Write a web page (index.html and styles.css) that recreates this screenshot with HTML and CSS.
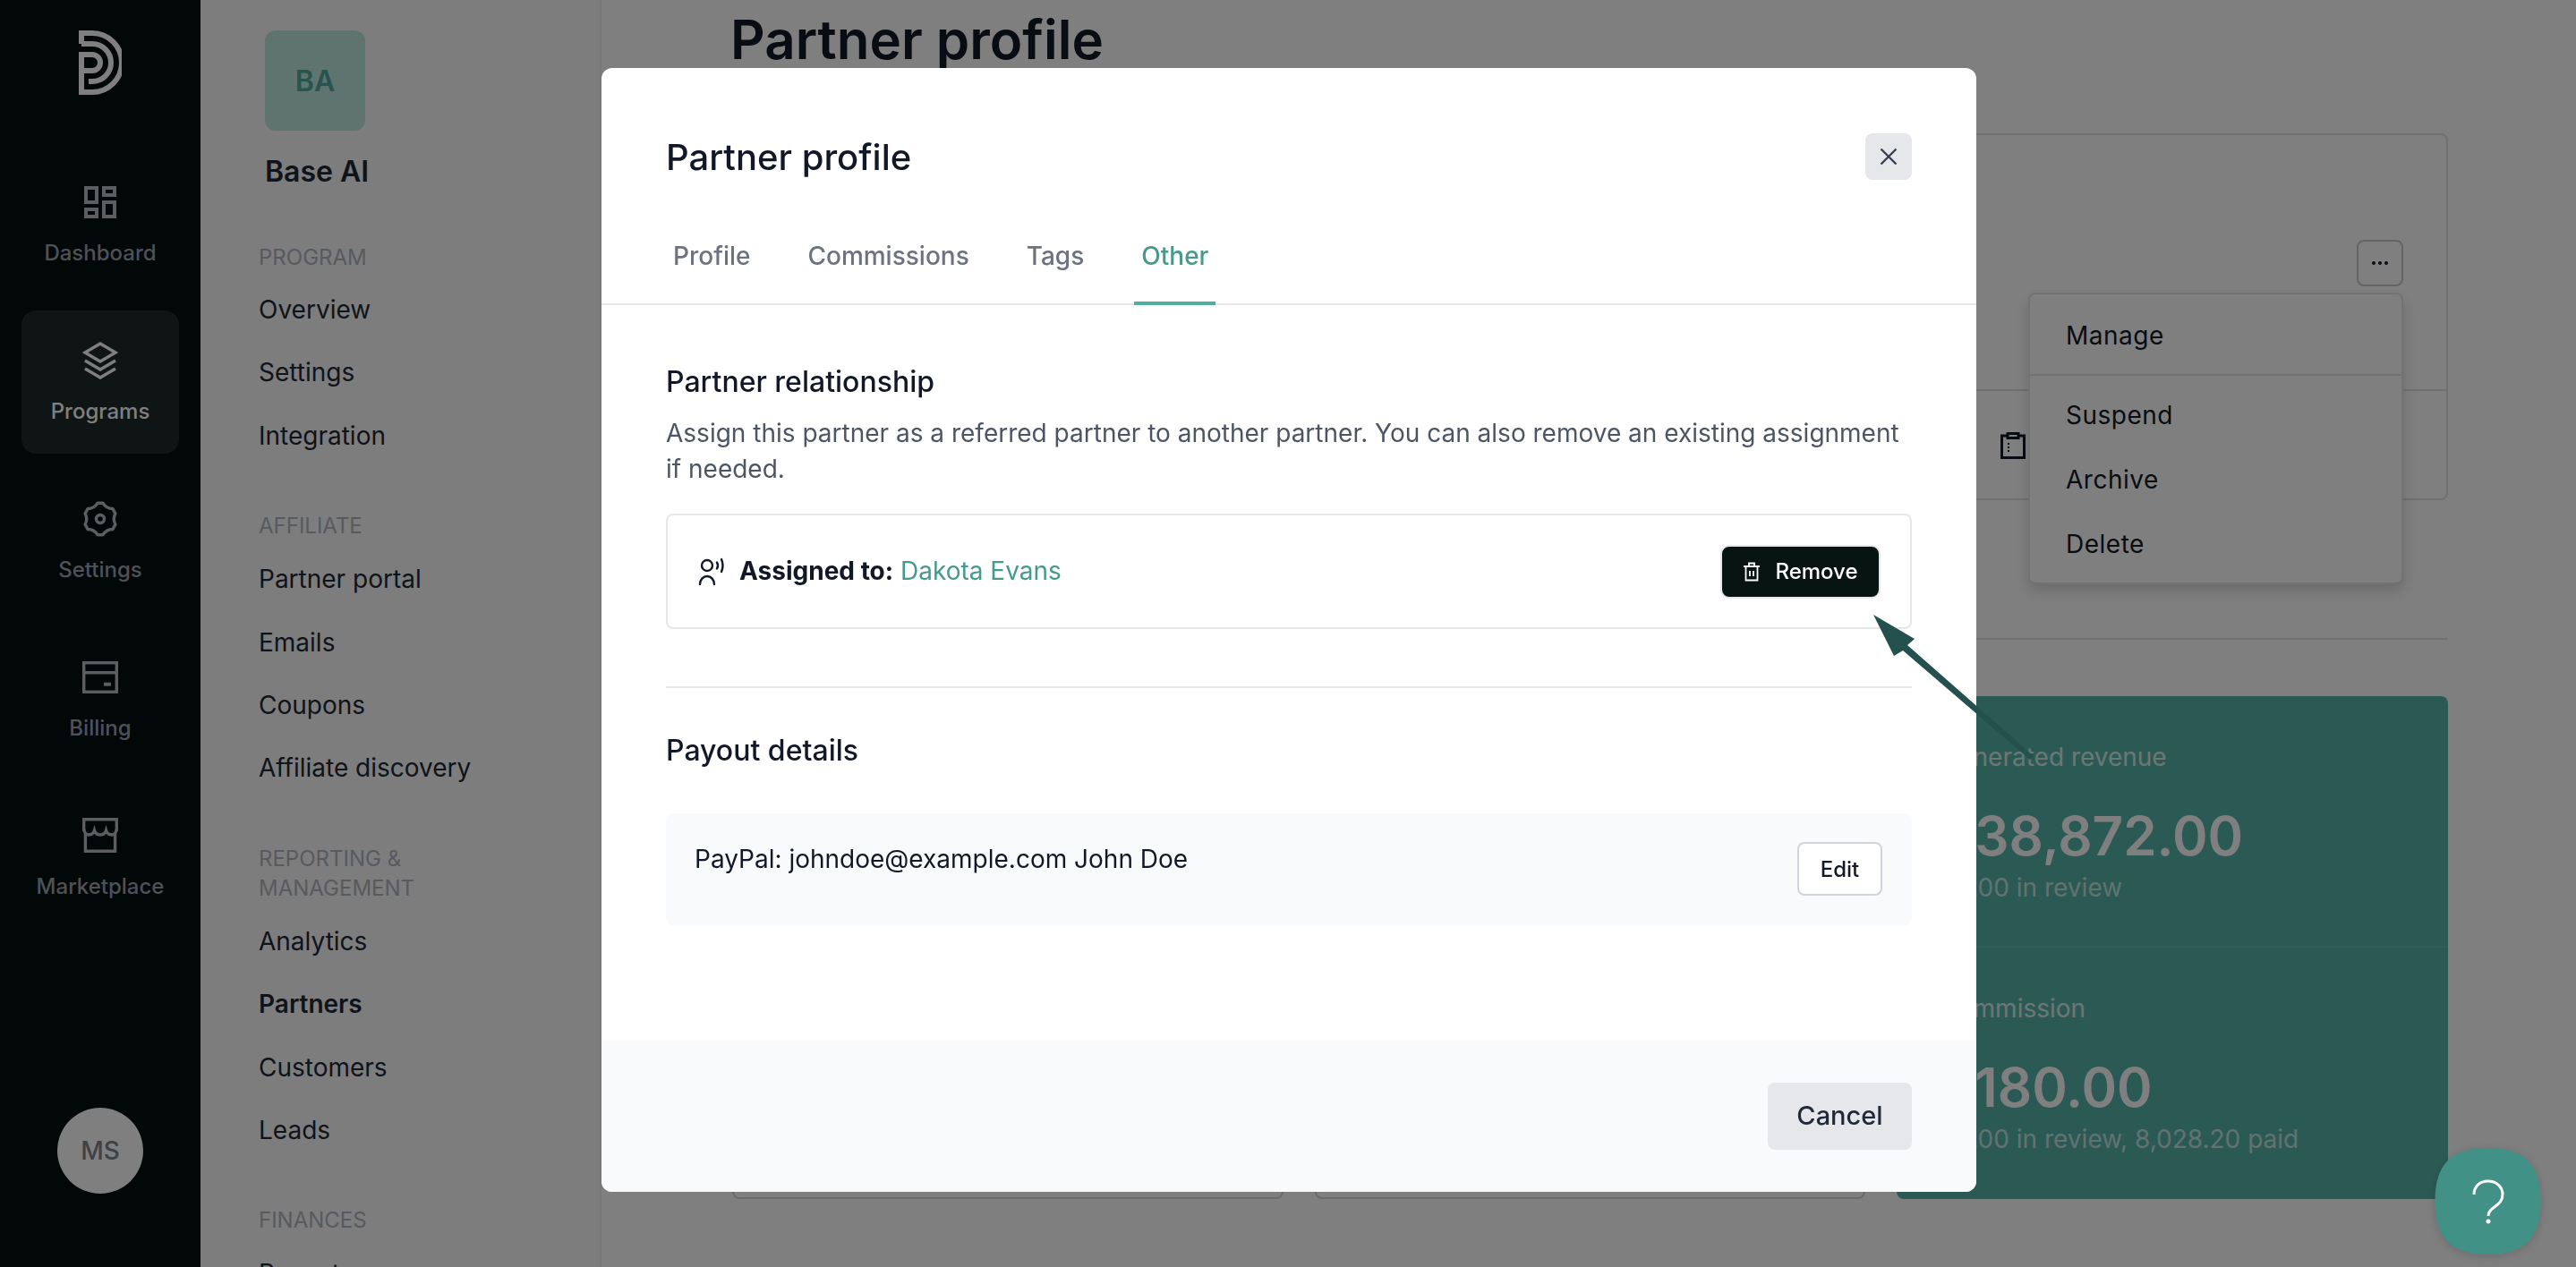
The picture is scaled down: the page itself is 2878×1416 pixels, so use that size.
FILE: index.html
```html
<!DOCTYPE html>
<html lang="en">
<head>
<meta charset="UTF-8">
<meta name="viewport" content="width=device-width, initial-scale=1.0">
<title>Partner profile</title>
<link rel="stylesheet" href="styles.css">
</head>
<body>

<div class="app">
  <aside class="rail">
    <svg class="logo" viewBox="0 0 48 72" fill="none" stroke="currentColor" stroke-width="6">
      <path d="M3 15V3H15A33 33 0 0 1 15 69H3V27H15A9 9 0 0 1 15 45H3"/>
      <path d="M3 15H15A21 21 0 0 1 15 57H11"/>
    </svg>
    <nav class="rail-nav">
      <a class="rail-item">
        <svg class="rail-icon" viewBox="0 0 24 24" fill="currentColor"><path d="M19 5v2h-4V5h4M9 5v6H5V5h4m10 8v6h-4v-6h4M9 17v2H5v-2h4M21 3h-8v6h8V3zM11 3H3v10h8V3zm10 8h-8v10h8V11zm-10 4H3v6h8v-6z"/></svg>
        <span>Dashboard</span>
      </a>
      <a class="rail-item active">
        <svg class="rail-icon" viewBox="0 0 48 48" fill="none" stroke="currentColor" stroke-width="3.4">
          <path d="M24 5L41 15L24 25L7 15Z"/>
          <path d="M7 24L24 34L41 24"/>
          <path d="M7 33L24 43L41 33"/>
        </svg>
        <span>Programs</span>
      </a>
      <a class="rail-item">
        <svg class="rail-icon" viewBox="0 0 48 48" fill="none" stroke="currentColor" stroke-width="3.4" stroke-linejoin="round">
          <path d="M20.87 6.27L27.13 6.27Q30.75 12.31 37.79 12.43L40.91 17.84Q37.5 24 40.91 30.16L37.79 35.57Q30.75 35.69 27.13 41.73L20.87 41.73Q17.25 35.69 10.21 35.57L7.09 30.16Q10.5 24 7.09 17.84L10.21 12.43Q17.25 12.31 20.87 6.27Z"/>
          <circle cx="24" cy="24" r="4.5"/>
        </svg>
        <span>Settings</span>
      </a>
      <a class="rail-item">
        <svg class="rail-icon" viewBox="0 0 48 48" fill="none" stroke="currentColor" stroke-width="3.4">
          <rect x="5.7" y="7.7" width="36.6" height="32.6"/>
          <path d="M5.7 18.7H42.3"/>
          <path d="M28 31.7H36" stroke-width="4"/>
        </svg>
        <span>Billing</span>
      </a>
      <a class="rail-item">
        <svg class="rail-icon" viewBox="0 0 48 48" fill="none" stroke="currentColor" stroke-width="3.4">
          <path d="M5.7 19V5.700H42.3V19"/>
          <path d="M5.7 17Q7 23 11 23Q16 23 17.5 18Q19 23 24 23Q29 23 30.5 18Q32 23 37 23Q41 23 42.3 17"/>
          <path d="M7.4 21V41.3H40.6V21"/>
        </svg>
        <span>Marketplace</span>
      </a>
    </nav>
    <div class="avatar">MS</div>
  </aside>

  <aside class="sidebar">
    <div class="brand-tile">BA</div>
    <div class="brand-name">Base AI</div>

    <div class="side-heading first">Program</div>
    <a class="side-link">Overview</a>
    <a class="side-link">Settings</a>
    <a class="side-link">Integration</a>

    <div class="side-heading">Affiliate</div>
    <a class="side-link">Partner portal</a>
    <a class="side-link">Emails</a>
    <a class="side-link">Coupons</a>
    <a class="side-link">Affiliate discovery</a>

    <div class="side-heading">Reporting &amp;<br>Management</div>
    <a class="side-link">Analytics</a>
    <a class="side-link current">Partners</a>
    <a class="side-link">Customers</a>
    <a class="side-link">Leads</a>

    <div class="side-heading">Finances</div>
    <a class="side-link">Payouts</a>
  </aside>

  <main class="main">
    <h1 class="page-title">Partner profile</h1>

    <section class="profile-card">
      <div class="profile-top">
        <button class="more-btn" type="button">
          <svg width="18" height="4" viewBox="0 0 18 4" fill="currentColor"><circle cx="2" cy="2" r="2"/><circle cx="9" cy="2" r="2"/><circle cx="16" cy="2" r="2"/></svg>
        </button>
      </div>
      <div class="profile-bottom">
        <svg width="28" height="30" viewBox="0 0 28 30" fill="none" stroke="currentColor" stroke-width="3">
          <path d="M8 4H1.5V28.5H26.5V4H20"/>
          <rect x="8" y="1.5" width="12" height="5"/>
          <path d="M9 12V23" stroke-width="2" stroke-dasharray="2 2"/>
        </svg>
      </div>
      <div class="dropdown">
        <a class="dropdown-item">Manage</a>
        <div class="dropdown-line"></div>
        <a class="dropdown-item">Suspend</a>
        <a class="dropdown-item">Archive</a>
        <a class="dropdown-item">Delete</a>
      </div>
    </section>

    <hr class="main-line">

    <section class="stats">
      <div class="stat-card"></div>
      <div class="stat-card"></div>
      <div class="stat-card teal">
        <div class="stat-block">
          <div class="stat-label">Generated revenue</div>
          <div class="stat-value">$38,872.00</div>
          <div class="stat-note">$0.00 in review</div>
        </div>
        <div class="stat-block">
          <div class="stat-label">Commission</div>
          <div class="stat-value">$180.00</div>
          <div class="stat-note">$0.00 in review, 8,028.20 paid</div>
        </div>
      </div>
    </section>
  </main>
</div>

<div class="overlay"></div>

<div class="modal">
  <header class="modal-head">
    <h2 class="modal-title">Partner profile</h2>
    <button class="close-btn" type="button">
      <svg width="20" height="20" viewBox="0 0 20 20" fill="none" stroke="currentColor" stroke-width="2.4"><path d="M1.5 1.5L18.5 18.5M18.5 1.5L1.5 18.5"/></svg>
    </button>
  </header>

  <div class="tabs">
    <a class="tab">Profile</a>
    <a class="tab">Commissions</a>
    <a class="tab">Tags</a>
    <a class="tab active">Other</a>
  </div>

  <div class="modal-body">
    <h3 class="section-title">Partner relationship</h3>
    <p class="section-text">Assign this partner as a referred partner to another partner. You can also remove an existing assignment if needed.</p>

    <div class="assign-box">
      <svg class="assign-icon" width="32" height="32" viewBox="0 0 32 32" fill="none" stroke="currentColor" stroke-width="2.4" stroke-linecap="round">
        <circle cx="11" cy="9" r="6"/>
        <path d="M3 30A8 9 0 0 1 19 30"/>
        <path d="M22 5.5Q24 9 22 12.5"/>
        <path d="M27 2Q30 9 27 16"/>
      </svg>
      <div class="assign-text"><strong>Assigned to:</strong> <a class="accent">Dakota Evans</a></div>
      <button class="remove-btn" type="button">
        <svg width="20" height="22" viewBox="0 0 20 22" fill="none" stroke="currentColor" stroke-width="1.8">
          <path d="M1 5H19M3.5 5V20.5H16.5V5M7 5V1.5H13V5M8 10V16M12 10V16"/>
        </svg>
        Remove
      </button>
    </div>

    <hr class="body-line">

    <h3 class="section-title payout-title">Payout details</h3>
    <div class="payout-box">
      <div class="payout-text">PayPal: johndoe@example.com John Doe</div>
      <button class="edit-btn" type="button">Edit</button>
    </div>
  </div>

  <footer class="modal-foot">
    <button class="cancel-btn" type="button">Cancel</button>
  </footer>
</div>

<!-- annotation arrow -->
<svg class="arrow" width="200" height="180" viewBox="0 0 200 180">
  <path d="M3 6L49 33L41 40L182 164L178 168L36 46L26 52Z" fill="#24504d"/>
</svg>

<button class="help-btn" type="button">
  <svg width="119" height="119" viewBox="0 0 118 119">
    <path d="M59 0C100 0 118 18 118 59.500S100 119 59 119S0 101 0 59.500S18 0 59 0Z" fill="#419186"/>
    <path d="M43.500 52C43.500 43 50 37 59 37C68 37 75.500 43 75.500 52C75.500 60 70 63 65 67C61 70 59.500 72 59.500 76" fill="none" stroke="#fff" stroke-width="3"/>
    <circle cx="59.500" cy="82" r="2.500" fill="#fff"/>
  </svg>
</button>

</body>
</html>
```
FILE: styles.css
```css
* {
  box-sizing: border-box;
}

html, body {
  margin: 0;
  height: 1416px;
  overflow: hidden;
}

body {
  font-family: Inter, "Noto Sans", sans-serif;
  font-size: 28px;
  color: #1f2937;
  background-color: #fff;
}

button {
  font-family: inherit;
  cursor: pointer;
}

.app {
  display: flex;
  height: 1416px;
}

/* icon rail */
.rail {
  width: 224px;
  flex-shrink: 0;
  display: flex;
  flex-direction: column;
  align-items: center;
  padding: 34px 24px 82px;
  background-color: #051011;
  color: #9ca3af;
}

.logo {
  width: 48px;
  height: 72px;
  color: #fff;
  flex-shrink: 0;
}

.rail-nav {
  width: 100%;
  margin-top: 64px;
  display: flex;
  flex-direction: column;
  gap: 17px;
}

.rail-item {
  height: 160px;
  padding-top: 32px;
  display: flex;
  flex-direction: column;
  align-items: center;
  gap: 15px;
  border-radius: 16px;
  font-size: 24px;
  font-weight: 500;
  line-height: 36px;
  white-space: nowrap;
}

.rail-icon {
  width: 48px;
  height: 48px;
  color: #b8bcc2;
}

.rail-item.active {
  background-color: #1e2a28;
  color: #fff;
}

.rail-item.active .rail-icon {
  color: #fff;
}

.avatar {
  width: 96px;
  height: 96px;
  margin-top: auto;
  border-radius: 50%;
  background-color: #fff;
  color: #7d8290;
  font-size: 28px;
  font-weight: 500;
  display: flex;
  align-items: center;
  justify-content: center;
}

/* program sidebar */
.sidebar {
  width: 448px;
  flex-shrink: 0;
  padding: 34px 40px 0 65px;
  background-color: #fafafa;
  border-right: 2px solid #f0f0f0;
  overflow: hidden;
}

.brand-tile {
  width: 112px;
  height: 112px;
  margin-left: 7px;
  border-radius: 12px;
  background-color: #bfe6df;
  color: #50a89c;
  font-size: 32px;
  font-weight: 600;
  display: flex;
  align-items: center;
  justify-content: center;
}

.brand-name {
  margin: 24px 0 0 7px;
  font-size: 32px;
  font-weight: 600;
  line-height: 44px;
}

.side-heading {
  margin-top: 49px;
  margin-bottom: 8px;
  color: #b0b5be;
  font-size: 24px;
  line-height: 33px;
  text-transform: uppercase;
}

.side-heading.first {
  margin-top: 57px;
  margin-bottom: 7px;
}

.side-link {
  display: block;
  height: 70.400px;
  padding: 15px 0;
  line-height: 40px;
}

.side-link.current {
  font-weight: 600;
}

/* page behind the modal */
.main {
  flex: 1;
  min-width: 0;
  padding: 8px 143px 0 144px;
}

.page-title {
  margin: 0 0 69px;
  font-size: 60px;
  font-weight: 600;
  line-height: 72px;
  color: #111827;
}

.profile-card {
  position: relative;
  height: 410px;
  border: 2px solid #e0e0e2;
  border-radius: 8px;
}

.profile-top {
  height: 286px;
  padding: 117px 48px 0 0;
  display: flex;
  justify-content: flex-end;
  border-bottom: 2px solid #e0e0e2;
}

.profile-bottom {
  padding: 46px 470px 0 0;
  display: flex;
  justify-content: flex-end;
  color: #111827;
}

.more-btn {
  width: 52px;
  height: 52px;
  padding: 0;
  border: 2px solid #c8c9cf;
  border-radius: 8px;
  background: none;
  color: #111827;
  display: flex;
  align-items: center;
  justify-content: center;
}

.dropdown {
  position: absolute;
  top: 176px;
  right: 48px;
  width: 419px;
  height: 326px;
  padding: 10px 0;
  border: 2px solid #e5e5e8;
  border-radius: 8px;
  background-color: #fff;
  box-shadow: 0 8px 16px rgba(0, 0, 0, 0.16);
}

.dropdown-item {
  display: block;
  height: 72px;
  padding: 16px 40px;
  line-height: 40px;
  letter-spacing: 0.5px;
  color: #111827;
}

.dropdown-line {
  height: 2px;
  margin: 7px 0 8px;
  background-color: #e5e5e8;
}

.main-line {
  margin: 154px 0 63px;
  border: 0;
  border-top: 2px solid #e0e0e2;
}

.stats {
  margin-left: 2px;
  display: grid;
  grid-template-columns: repeat(3, 1fr);
  gap: 35px;
}

.stat-card {
  height: 562px;
  border: 2px solid #d4d5d8;
  border-radius: 8px;
}

.stat-card.teal {
  border: 0;
  background-color: #57b5aa;
  color: #fff;
}

.stat-block {
  height: 281px;
  padding: 48px;
  border-bottom: 2px solid #5fbcb1;
}

.stat-block:last-child {
  border-bottom: 0;
}

.stat-label {
  line-height: 40px;
  color: #d8eeeb;
}

.stat-value {
  margin-top: 32px;
  font-size: 60px;
  font-weight: 600;
  line-height: 72px;
}

.stat-note {
  margin-top: 2px;
  line-height: 40px;
  color: #c4e4e0;
}

/* dim layer */
.overlay {
  position: fixed;
  inset: 0;
  z-index: 10;
  background-color: rgba(0, 0, 0, 0.5);
}

/* modal */
.modal {
  position: absolute;
  top: 76px;
  left: 672px;
  z-index: 20;
  width: 1536px;
  height: 1256px;
  display: flex;
  flex-direction: column;
  overflow: hidden;
  border-radius: 12px;
  background-color: #fff;
}

.modal-head {
  padding: 72px 72px 0;
  display: flex;
  align-items: center;
  justify-content: space-between;
}

.modal-title {
  margin: 0;
  font-size: 40px;
  font-weight: 500;
  line-height: 56px;
  color: #111827;
}

.close-btn {
  width: 52px;
  height: 52px;
  margin-top: -2px;
  padding: 0;
  border: 0;
  border-radius: 8px;
  background-color: #e5e7eb;
  color: #374151;
  display: flex;
  align-items: center;
  justify-content: center;
}

.tabs {
  margin-top: 62px;
  padding-left: 72px;
  display: flex;
  gap: 48px;
  border-bottom: 2px solid #e5e7eb;
}

.tab {
  margin-bottom: -2px;
  padding: 0 8px 31px;
  border-bottom: 4px solid transparent;
  font-weight: 500;
  line-height: 40px;
  color: #6b7280;
}

.tab.active {
  border-bottom-color: #4fae9f;
  color: #459a8c;
}

.modal-body {
  padding: 64px 72px 0;
}

.section-title {
  margin: 0;
  font-size: 32px;
  font-weight: 500;
  line-height: 44px;
  color: #111827;
}

.section-text {
  margin: 15px 0 30px;
  line-height: 40px;
  color: #4b5563;
}

.assign-box {
  height: 129px;
  padding: 0 33px 0 33px;
  display: flex;
  align-items: center;
  border: 2px solid #e5e7eb;
  border-radius: 8px;
}

.assign-icon {
  flex-shrink: 0;
  color: #111827;
}

.assign-text {
  margin: -2px 0 0 15px;
  color: #111827;
}

.assign-text strong {
  font-weight: 700;
}

.accent {
  color: #459a8c;
}

.remove-btn {
  width: 179px;
  height: 60px;
  margin-left: auto;
  padding: 0;
  border: 2px solid #e5e7eb;
  border-radius: 10px;
  background-color: #081412;
  color: #fff;
  font-size: 24px;
  font-weight: 500;
  display: flex;
  align-items: center;
  justify-content: center;
  gap: 16px;
}

.body-line {
  margin: 64px 0 0;
  border: 0;
  border-top: 2px solid #e5e7eb;
}

.payout-title {
  margin-top: 48px;
}

.payout-box {
  height: 125px;
  margin-top: 48px;
  padding: 31px 33px 0 32px;
  display: flex;
  align-items: flex-start;
  justify-content: space-between;
  border-radius: 8px;
  background-color: #f9fafb;
}

.payout-text {
  line-height: 40px;
  color: #111827;
}

.edit-btn {
  width: 95px;
  height: 60px;
  margin-top: 1px;
  padding: 0;
  border: 2px solid #d1d5db;
  border-radius: 8px;
  background-color: #fff;
  color: #111827;
  font-size: 24px;
  font-weight: 500;
}

.modal-foot {
  height: 169px;
  margin-top: auto;
  padding: 47px 72px 0 0;
  display: flex;
  justify-content: flex-end;
  background-color: #f9fafb;
}

.cancel-btn {
  width: 161px;
  height: 75px;
  padding: 0 0 2px;
  border: 0;
  border-radius: 8px;
  background-color: #e5e7eb;
  color: #1f2937;
  font-size: 29px;
  font-weight: 500;
}

/* annotation and help bubble sit on top of everything */
.arrow {
  position: absolute;
  top: 681px;
  left: 2090px;
  z-index: 30;
}

.help-btn {
  position: fixed;
  top: 1283px;
  left: 2720px;
  z-index: 30;
  width: 119px;
  height: 119px;
  padding: 0;
  border: 0;
  background: none;
  filter: drop-shadow(0 2px 6px rgba(0, 0, 0, 0.15));
}

.help-btn svg {
  display: block;
}
```
